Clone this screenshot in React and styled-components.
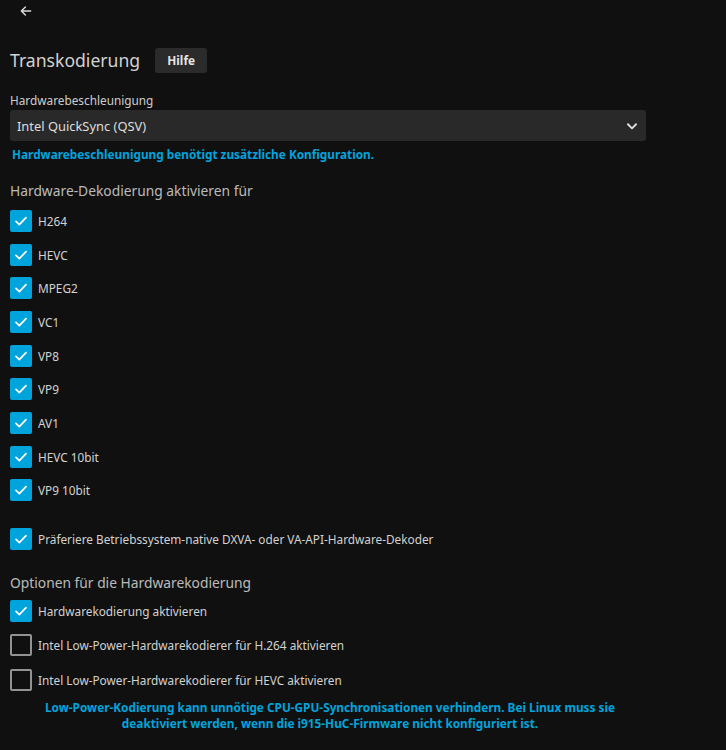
import React from "react";
import styled, { createGlobalStyle } from "styled-components";

const Global = createGlobalStyle`
  html, body { margin: 0; padding: 0; background: #101010; }
  body { font-family: "Noto Sans", "Open Sans", sans-serif; color: rgba(255,255,255,0.8); }
  * { box-sizing: border-box; }
`;

const Page = styled.div`
  width: 726px;
  height: 750px;
  overflow: hidden;
  background: #101010;
`;

const TopBar = styled.div`
  height: 22px;
  display: flex;
  align-items: center;
  padding-left: 19px;
`;

const BackButton = styled.button`
  background: none;
  border: 0;
  padding: 0;
  display: flex;
  color: rgba(255,255,255,0.85);
  cursor: pointer;
`;

const Content = styled.div`
  padding: 0 10px;
  width: 660px;
`;

const TitleRow = styled.div`
  display: flex;
  align-items: center;
  gap: 15px;
  margin-top: 25px;
  height: 26px;
`;

const Title = styled.h2`
  margin: 0;
  font-size: 17.6px;
  font-weight: 400;
  color: rgba(255,255,255,0.82);
`;

const HelpButton = styled.button`
  background: #2b2b2b;
  border: 0;
  border-radius: 3px;
  color: rgba(255,255,255,0.9);
  font-family: inherit;
  font-weight: 700;
  font-size: 11.8px;
  width: 52px;
  height: 25px;
  padding: 0;
`;

const FieldLabel = styled.div`
  margin-top: 19px;
  font-size: 11.8px;
  line-height: 16px;
`;

const Select = styled.div`
  margin-top: 2px;
  width: 636px;
  height: 31px;
  background: #292929;
  border-radius: 3px;
  display: flex;
  align-items: center;
  justify-content: space-between;
  padding: 0 7px;
  font-size: 12.9px;
  color: rgba(255,255,255,0.85);
`;

const Info = styled.div`
  color: #00a4dc;
  font-weight: 700;
  font-size: 11.8px;
  line-height: 16px;
  margin-top: ${(p) => p.$mt ?? 5}px;
  padding-left: ${(p) => (p.$center ? 0 : 2)}px;
  text-align: ${(p) => (p.$center ? "center" : "left")};
`;

const SectionHeading = styled.h3`
  margin: 0;
  margin-top: ${(p) => p.$mt}px;
  font-size: 13.8px;
  font-weight: 400;
  line-height: 20px;
  color: rgba(255,255,255,0.72);
`;

const List = styled.div`
  display: flex;
  flex-direction: column;
  margin-top: ${(p) => p.$mt}px;
`;

const Row = styled.label`
  display: flex;
  align-items: center;
  height: ${(p) => p.$h}px;
  gap: 6px;
  font-size: 11.8px;
  color: rgba(255,255,255,0.82);
`;

const Box = styled.span`
  width: 22px;
  height: 22px;
  flex: none;
  border-radius: 2px;
  display: flex;
  align-items: center;
  justify-content: center;
  background: ${(p) => (p.$checked ? "#00a4dc" : "transparent")};
  border: ${(p) => (p.$checked ? "0" : "2px solid rgba(255,255,255,0.55)")};
`;

const Check = () => (
  <svg width="16" height="16" viewBox="0 0 24 24" fill="none" stroke="#fff" strokeWidth="2.6" strokeLinecap="round" strokeLinejoin="round">
    <path d="M4.5 12.5l5 5L19.5 7" />
  </svg>
);

const Checkbox = ({ checked, h = 33.7, children }) => (
  <Row $h={h}>
    <Box $checked={checked}>{checked && <Check />}</Box>
    <span>{children}</span>
  </Row>
);

const decoders = ["H264", "HEVC", "MPEG2", "VC1", "VP8", "VP9", "AV1", "HEVC 10bit", "VP9 10bit"];

export default function App() {
  return (
    <Page>
      <Global />
      <TopBar>
        <BackButton aria-label="Zurück">
          <svg width="14" height="14" viewBox="0 0 24 24" fill="none" stroke="currentColor" strokeWidth="2.4" strokeLinecap="round" strokeLinejoin="round">
            <path d="M20 12H4M11 5l-7 7 7 7" />
          </svg>
        </BackButton>
      </TopBar>
      <Content>
        <TitleRow>
          <Title>Transkodierung</Title>
          <HelpButton>Hilfe</HelpButton>
        </TitleRow>
        <FieldLabel>Hardwarebeschleunigung</FieldLabel>
        <Select>
          <span>Intel QuickSync (QSV)</span>
          <svg width="14" height="14" viewBox="0 0 24 24" fill="none" stroke="rgba(255,255,255,0.85)" strokeWidth="3.2" strokeLinecap="round" strokeLinejoin="round">
            <path d="M5 9l7 7 7-7" />
          </svg>
        </Select>
        <Info>Hardwarebeschleunigung benötigt zusätzliche Konfiguration.</Info>
        <SectionHeading $mt={19}>Hardware-Dekodierung aktivieren für</SectionHeading>
        <List $mt={3}>
          {decoders.map((d) => (
            <Checkbox key={d} checked>{d}</Checkbox>
          ))}
        </List>
        <List $mt={15}>
          <Checkbox checked>Präferiere Betriebssystem-native DXVA- oder VA-API-Hardware-Dekoder</Checkbox>
        </List>
        <SectionHeading $mt={17}>Optionen für die Hardwarekodierung</SectionHeading>
        <List $mt={1}>
          <Checkbox checked h={34.3}>Hardwarekodierung aktivieren</Checkbox>
          <Checkbox h={34.3}>Intel Low-Power-Hardwarekodierer für H.264 aktivieren</Checkbox>
          <Checkbox h={34.3}>Intel Low-Power-Hardwarekodierer für HEVC aktivieren</Checkbox>
        </List>
        <Info $center $mt={2}>
          Low-Power-Kodierung kann unnötige CPU-GPU-Synchronisationen verhindern. Bei Linux muss sie
          <br />
          deaktiviert werden, wenn die i915-HuC-Firmware nicht konfiguriert ist.
        </Info>
      </Content>
    </Page>
  );
}
